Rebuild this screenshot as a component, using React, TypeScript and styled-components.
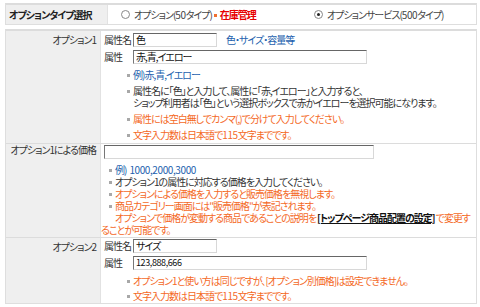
import React from "react";
import styled, { createGlobalStyle } from "styled-components";

const GlobalStyle = createGlobalStyle`
  html, body {
    margin: 0;
    padding: 0;
    background: #ffffff;
  }
  body {
    font-family: "Noto Sans CJK JP", "Noto Sans", sans-serif;
    font-size: 10px;
    line-height: 12px;
    letter-spacing: -1px;
    color: #333333;
    font-feature-settings: "palt";
  }
  * { box-sizing: border-box; }
`;

const Page = styled.div`
  width: 480px;
  padding: 3px 3px 0 5px;
`;

const TypeBar = styled.div`
  display: flex;
  height: 22px;
  border: 1px solid #dedede;
  border-top: 2px solid #dcdcdc;
`;

const TypeLabel = styled.div`
  width: 102px;
  background: #efefef;
  font-weight: bold;
  color: #222;
  display: flex;
  align-items: center;
  padding-left: 3px;
  border-right: 1px solid #e2e2e2;
  white-space: nowrap;
`;

const TypeChoices = styled.div`
  flex: 1;
  display: flex;
  align-items: center;
  padding-left: 13px;
  color: #444;
`;

const Choice = styled.label<{ $width?: number }>`
  display: flex;
  align-items: center;
  gap: 4px;
  width: ${(p) => (p.$width ? `${p.$width}px` : "auto")};
`;

const Radio = styled.span<{ $checked?: boolean }>`
  display: inline-block;
  position: relative;
  width: 9px;
  height: 9px;
  border-radius: 50%;
  border: 1px solid #888;
  background: #fff;
  &::after {
    content: "";
    display: ${(p) => (p.$checked ? "block" : "none")};
    position: absolute;
    left: 2px;
    top: 2px;
    width: 3px;
    height: 3px;
    border-radius: 50%;
    background: #222;
  }
`;

const Dot = styled.span`
  display: inline-block;
  width: 3px;
  height: 3px;
  background: #f07030;
  margin: 0 3px 1px 2px;
  vertical-align: middle;
`;

const Stock = styled.span`
  color: #e60000;
  font-weight: bold;
`;

const OptionTable = styled.div`
  margin-top: 4px;
  border: 1px solid #dedede;
  border-top: 2px solid #dcdcdc;
`;

const Row = styled.div`
  display: grid;
  grid-template-columns: 95px 1fr;
  & + & {
    border-top: 1px solid #dcdcdc;
  }
`;

const RowLabel = styled.div<{ $top: number }>`
  background: #efefef;
  text-align: right;
  padding: ${(p) => p.$top}px 4px 0 0;
  color: #333;
  border-right: 1px solid #e2e2e2;
  white-space: nowrap;
`;

const RowBody = styled.div<{ $pt: number; $pb: number }>`
  padding: ${(p) => p.$pt}px 3px ${(p) => p.$pb}px 3px;
`;

const Field = styled.div`
  display: flex;
  align-items: center;
  height: 14px;
  & + & {
    margin-top: 3px;
  }
`;

const FieldName = styled.span`
  width: 29px;
  white-space: nowrap;
`;

const TextBox = styled.div<{ $w: number; $small?: boolean }>`
  width: ${(p) => p.$w}px;
  height: 14px;
  border-top: 1px solid #666;
  border-left: 1px solid #777;
  border-right: 1px solid #d8d8d8;
  border-bottom: 1px solid #d8d8d8;
  background: #fff;
  color: #111;
  padding-left: 2px;
  font-size: ${(p) => (p.$small ? "9px" : "10px")};
  letter-spacing: ${(p) => (p.$small ? "-0.4px" : "-1px")};
  line-height: 12px;
  white-space: nowrap;
  overflow: hidden;
`;

const Hint = styled.span`
  color: #1d5fae;
  margin-left: 9px;
`;

const List = styled.ul<{ $indent: number; $gap: number; $mt: number }>`
  list-style: none;
  margin: ${(p) => p.$mt}px 0 0 0;
  padding: 0 0 0 ${(p) => p.$indent}px;
  & > li + li {
    margin-top: ${(p) => p.$gap}px;
  }
`;

const Item = styled.li<{ $tone?: "blue" | "orange" | "dark" }>`
  position: relative;
  line-height: 12px;
  color: ${(p) =>
    p.$tone === "blue" ? "#1d5fae" : p.$tone === "orange" ? "#f4691f" : "#333"};
  &::before {
    content: "";
    position: absolute;
    left: -6px;
    top: 5px;
    width: 3px;
    height: 3px;
    background: #a8a8a8;
  }
`;

const Num = styled.span<{ $lead?: number }>`
  letter-spacing: -0.4px;
  margin-left: ${(p) => p.$lead ?? 0}px;
`;

const Note = styled.p`
  margin: 0 0 0 -3px;
  text-indent: 14px;
  line-height: 12px;
  color: #f4691f;
`;

const PageLink = styled.a`
  color: #111;
  font-weight: bold;
  text-decoration: underline;
  margin: 0 1px;
`;

export default function App() {
  return (
    <>
      <GlobalStyle />
      <Page>
        <TypeBar>
          <TypeLabel>オプションタイプ選択</TypeLabel>
          <TypeChoices>
            <Choice $width={193}>
              <Radio />
              <span>
                オプション(<Num>50</Num>タイプ)
                <Dot />
                <Stock>在庫管理</Stock>
              </span>
            </Choice>
            <Choice>
              <Radio $checked />
              <span>
                オプションサービス(<Num>500</Num>タイプ)
              </span>
            </Choice>
          </TypeChoices>
        </TypeBar>

        <OptionTable>
          <Row>
            <RowLabel $top={3}>オプション1</RowLabel>
            <RowBody $pt={2} $pb={2}>
              <Field>
                <FieldName>属性名</FieldName>
                <TextBox $w={84}>色</TextBox>
                <Hint>色・サイズ・容量等</Hint>
              </Field>
              <Field>
                <FieldName>属性</FieldName>
                <TextBox $w={234}>赤,青,イエロー</TextBox>
              </Field>
              <List $indent={29} $gap={4} $mt={5}>
                <Item $tone="blue">例)赤,青,イエロー</Item>
                <Item>
                  属性名に「色」と入力して、属性に「赤,イエロー」と入力すると、
                  <br />
                  ショップ利用者は「色」という選択ボックスで赤かイエローを選択可能になります。
                </Item>
                <Item $tone="orange">
                  属性には空白無しでカンマ(,)で分けて入力してください。
                </Item>
                <Item $tone="orange">
                  文字入力数は日本語で<Num>115</Num>文字までです。
                </Item>
              </List>
            </RowBody>
          </Row>

          <Row>
            <RowLabel $top={0}>オプション1による価格</RowLabel>
            <RowBody $pt={1} $pb={1}>
              <Field>
                <TextBox $w={270} />
              </Field>
              <List $indent={11} $gap={0} $mt={5}>
                <Item $tone="blue">
                  例)<Num $lead={3}>1000,2000,3000</Num>
                </Item>
                <Item>オプション1の属性に対応する価格を入力してください。</Item>
                <Item $tone="orange">
                  オプションによる価格を入力すると販売価格を無視します。
                </Item>
                <Item $tone="orange">
                  商品カテゴリー画面には"販売価格"が表記されます。
                </Item>
              </List>
              <Note>
                オプションで価格が変動する商品であることの説明を
                <PageLink href="#">[トップページ商品配置の設定]</PageLink>
                で変更することが可能です。
              </Note>
            </RowBody>
          </Row>

          <Row>
            <RowLabel $top={3}>オプション2</RowLabel>
            <RowBody $pt={1} $pb={1}>
              <Field>
                <FieldName>属性名</FieldName>
                <TextBox $w={84}>サイズ</TextBox>
              </Field>
              <Field>
                <FieldName>属性</FieldName>
                <TextBox $w={234} $small>
                  123,888,666
                </TextBox>
              </Field>
              <List $indent={29} $gap={3} $mt={5}>
                <Item $tone="orange">
                  オプション1と使い方は同じですが、[オプション別価格]は設定できません。
                </Item>
                <Item $tone="orange">
                  文字入力数は日本語で<Num>115</Num>文字までです。
                </Item>
              </List>
            </RowBody>
          </Row>
        </OptionTable>
      </Page>
    </>
  );
}
